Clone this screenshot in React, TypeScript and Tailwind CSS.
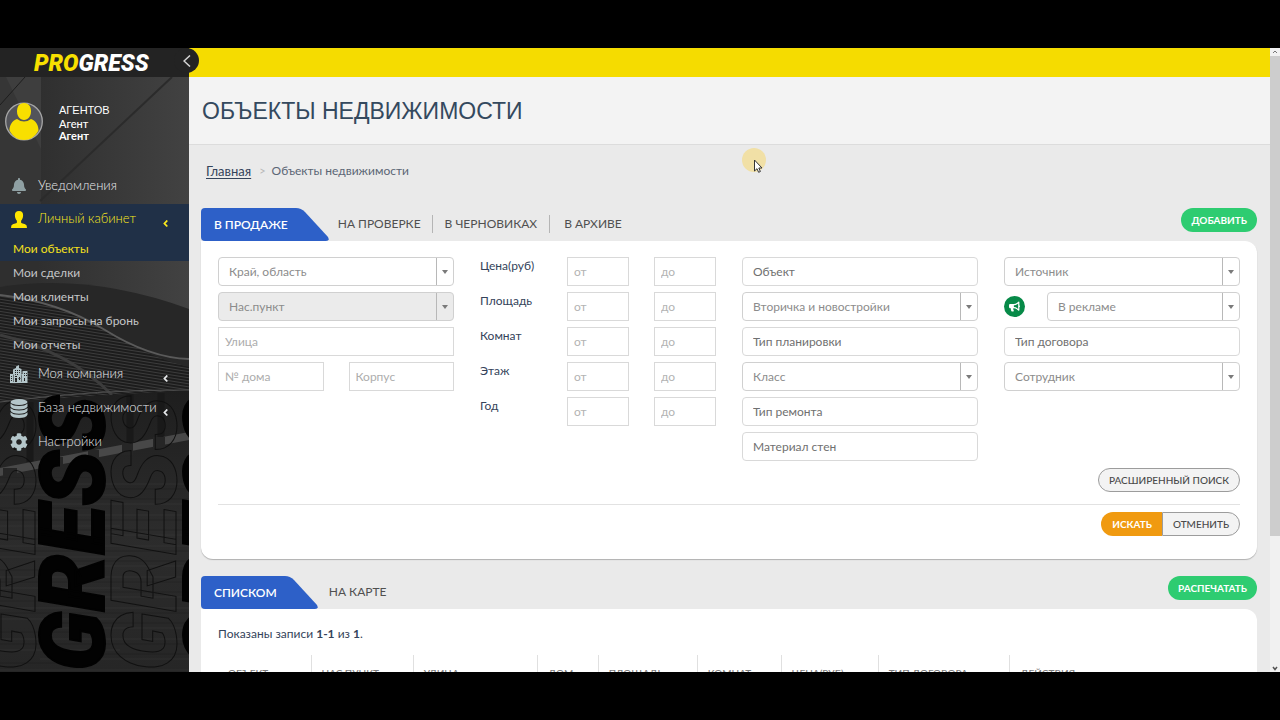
import React from "react";
import { FaAngleLeft, FaBell, FaBullhorn, FaCog } from "react-icons/fa";

const field =
  "h-[29px] w-full min-w-0 border border-[#d9d9d9] bg-white text-xs outline-none";

function PlainInput({ label }: { label: string }) {
  return (
    <input
      aria-label={label}
      placeholder={label}
      className={`${field} px-1.5 placeholder:text-[#adadad]`}
    />
  );
}

function TagInput({ label }: { label: string }) {
  return (
    <input
      aria-label={label}
      placeholder={label}
      className={`${field} rounded border-[#cfcfcf] px-2.5 placeholder:text-[#707070]`}
    />
  );
}

function Dropdown({ label, disabled }: { label: string; disabled?: boolean }) {
  return (
    <div
      className={`flex h-[29px] w-full min-w-0 overflow-hidden rounded border border-[#d0d0d0] ${
        disabled ? "bg-[#ebebeb]" : "bg-white"
      }`}
    >
      <select
        aria-label={label}
        disabled={disabled}
        className="min-w-0 flex-1 appearance-none bg-transparent px-2.5 text-xs text-[#8c8c8c] opacity-100 outline-none"
      >
        <option>{label}</option>
      </select>
      <span className="flex w-[17px] items-center justify-center border-l border-[#b8b8b8]">
        <svg width="6" height="4" viewBox="0 0 6 4" aria-hidden="true">
          <path d="M0 0H6L3 4Z" fill="#7a7a7a" />
        </svg>
      </span>
    </div>
  );
}

function RangeRow({ id, label }: { id: string; label: string }) {
  const box = `${field} px-1.5 placeholder:text-[#b3b3b3]`;
  return (
    <div className="grid grid-cols-3 gap-[25px]">
      <label htmlFor={id} className="text-xs leading-[18px] text-[#34435a]">
        {label}
      </label>
      <input id={id} placeholder="от" className={box} />
      <input aria-label={`${label} до`} placeholder="до" className={box} />
    </div>
  );
}

function ActiveTab({ children }: { children: React.ReactNode }) {
  return (
    <button className="flex h-[33px] text-xs font-semibold text-white">
      <span className="flex h-full items-center rounded-l bg-[#2d60c8] pr-2 pl-[13px]">
        {children}
      </span>
      <svg width="33" height="33" viewBox="0 0 33 33" aria-hidden="true">
        <path d="M0 0Q5 0 9 4L32 29Q34 33 30 33H0Z" fill="#2d60c8" />
      </svg>
    </button>
  );
}

function GreenButton({ children }: { children: React.ReactNode }) {
  return (
    <button className="h-6 rounded-full bg-[#2ecc71] px-2.5 text-[10px] font-bold text-white">
      {children}
    </button>
  );
}

function PersonIcon() {
  return (
    <svg width="16" height="17" viewBox="0 0 16 17" fill="currentColor" aria-hidden="true">
      <path d="M8 0C5 0 3.7 2 3.9 4.6C4 7 4.8 8.6 5.9 9.8V11.6C5.6 12.8 1.2 12.8 .4 14.6L0 17H16L15.6 14.6C14.8 12.8 10.4 12.8 10.1 11.6V9.8C11.2 8.6 12 7 12.1 4.6C12.3 2 11 0 8 0Z" />
    </svg>
  );
}

function BuildingsIcon() {
  return (
    <svg width="18" height="18" viewBox="0 0 18 18" aria-hidden="true">
      <path
        fill="currentColor"
        fillRule="evenodd"
        d="M0 9H3V4.500L6 3V1.500L9 0V3L11.500 4V9H12.500V6H17.500V18H0ZM1 11V12H2V11ZM1 13V14H2V13ZM1 15V16H2V15ZM3 9.500V17H3.500V9.500ZM5 5V6H6V5ZM7 5V6H8V5ZM9 5V6H10V5ZM5 7V8H6V7ZM7 7V8H8V7ZM9 7V8H10V7ZM5 9V10H6V9ZM7 9V10H8V9ZM5 11V12H7V11ZM5 13V17H7V13ZM11.500 9.500V17H12V9.500ZM14 8V9H15V8ZM16 8V9H17V8ZM14 10V11H15V10ZM16 10V11H17V10ZM9 12V13H8.500V14H9V15H10V14H10.500V13H10V12ZM14 13V16H15V13Z"
      />
    </svg>
  );
}

function DatabaseIcon() {
  return (
    <svg width="18" height="19" viewBox="0 0 18 19" fill="currentColor" aria-hidden="true">
      <ellipse cx="9" cy="3" rx="8.5" ry="3" />
      <path d="M.5 4.5Q3 7 9 7T17.500 4.500V7.500Q16 10.500 9 10.500T.5 7.500Z" />
      <path d="M.5 9Q3 11.500 9 11.500T17.500 9V11.500Q16 14.700 9 14.700T.5 11.500Z" />
      <path d="M.5 13.200Q3 15.700 9 15.700T17.500 13.200V15.700Q16 19 9 19T.5 15.700Z" />
    </svg>
  );
}

function SideRow({
  icon,
  label,
  chevron,
  active,
  compact,
}: {
  icon: React.ReactNode;
  label: string;
  chevron?: boolean;
  active?: boolean;
  compact?: boolean;
}) {
  return (
    <a
      href="#"
      className={`flex items-center pr-[18px] pl-2.5 text-[13px] font-light ${
        compact ? "h-[30px]" : "h-[34px]"
      } ${active ? "text-[#fbe91c]" : "text-[#e8eaec]"}`}
    >
      <span
        className={`flex w-[18px] shrink-0 justify-center ${
          active ? "text-[#ffe600]" : "text-[#b4c6ca]"
        }`}
      >
        {icon}
      </span>
      <span className="ml-2.5 flex-1 whitespace-nowrap">{label}</span>
      {chevron && <FaAngleLeft className="mt-2 size-[11px] shrink-0" />}
    </a>
  );
}

function SidebarArt() {
  const word = "GRESS";
  return (
    <svg
      className="absolute inset-0 h-full w-full"
      viewBox="0 0 189 595"
      preserveAspectRatio="xMinYMin slice"
      aria-hidden="true"
    >
      <defs>
        <linearGradient id="wall" x1="0" y1="0" x2="1" y2="0">
          <stop offset="0.2" stopColor="#2f2f2f" />
          <stop offset="1" stopColor="#424242" />
        </linearGradient>
        <linearGradient id="ground" x1="0" y1="0" x2="0" y2="1">
          <stop offset="0" stopColor="#1e1e1e" />
          <stop offset="0.5" stopColor="#2c2c2c" />
          <stop offset="1" stopColor="#262626" />
        </linearGradient>
        <pattern id="seats" width="8" height="3" patternUnits="userSpaceOnUse" patternTransform="rotate(9)">
          <rect width="8" height="3" fill="#1c1c1c" />
          <rect width="8" height="1" fill="#3c3c3c" />
        </pattern>
        <pattern id="streaks" width="189" height="31" patternUnits="userSpaceOnUse">
          <path d="M0 4H189M0 15H120M40 24H189" stroke="#3c3c3c" strokeWidth="1" opacity="0.4" />
          <path d="M0 9H189M60 19H189M0 28H90" stroke="#181818" strokeWidth="1" opacity="0.4" />
        </pattern>
      </defs>
      <rect width="189" height="595" fill="url(#wall)" />
      <path d="M0 0H41V135H0Z" fill="#3e3e3e" />
      <path d="M0 0H6L41 72V135H0Z" fill="#363636" />
      <path d="M0 28L25 0" stroke="#1e1e1e" />
      <path d="M172 0L40 124" stroke="#2b2b2b" strokeWidth="2" />
      <path d="M0 210Q90 196 189 232V595H0Z" fill="#272727" />
      <path d="M0 218Q60 225 105 253T189 290V350H0Z" fill="url(#seats)" />
      <path d="M0 218Q60 225 105 253T189 282" stroke="#5a5a5a" strokeWidth="2" fill="none" />
      <path d="M0 258Q70 275 112 318" stroke="#3c3c3c" strokeWidth="3" fill="none" />
      <path d="M0 325L189 313V595H0Z" fill="url(#ground)" />
      <path d="M0 325Q100 312 189 313" stroke="#505050" fill="none" />
      <path d="M30 325V385M130 317V372M161 316V368" stroke="#191919" strokeWidth="7" />
      <path d="M0 391L189 355V363L0 399Z" fill="#484848" />
      <path d="M3 391H17V400H3ZM47 380H63V391H47ZM88 373H99V385H88ZM122 366H133V378H122ZM153 360H165V371H153Z" fill="#262626" />
      <rect y="400" width="189" height="195" fill="url(#streaks)" />
      <g
        fontFamily="Roboto, sans-serif"
        fontWeight="900"
        fontStyle="italic"
        fontSize="90"
      >
        <text transform="translate(35 594) rotate(-90)" fill="none" stroke="#101010">{word}</text>
        <text transform="translate(104 594) rotate(-90)" fill="#020202" stroke="#020202" strokeWidth="2">{word}</text>
        <text transform="translate(176 594) rotate(-90)" fill="none" stroke="#101010">{word}</text>
        <text transform="translate(248 594) rotate(-90)" fill="#020202" stroke="#020202" strokeWidth="2">{word}</text>
      </g>
    </svg>
  );
}

function Sidebar() {
  return (
    <aside className="relative z-10 flex w-[189px] shrink-0 flex-col">
      <div className="relative flex h-[29px] items-center bg-[#232323]">
        <button
          aria-label="Свернуть меню"
          className="absolute top-0 -right-[10px] flex h-[25px] w-[25px] items-center justify-center rounded-full bg-[#232323] text-white"
        >
          <svg width="8" height="12" viewBox="0 0 8 12" fill="none" stroke="#d5d5d5" strokeWidth="1.5" aria-hidden="true">
            <path d="M7 .5L1 6L7 11.500" />
          </svg>
        </button>
        <a
          href="#"
          className="pt-0.5 pl-[34px] font-['Roboto',sans-serif] text-[23px] leading-[29px] font-black text-white italic"
        >
          <span className="text-[#f8e000]">PRO</span>GRESS
        </a>
      </div>
      <div className="relative flex-1 overflow-hidden bg-[#2c2c2c]">
        <SidebarArt />
        <div className="relative">
          <div className="flex h-[94px] items-start pt-[25px] pl-[5px]">
            <svg width="38" height="39" viewBox="0 0 38 39" aria-hidden="true">
              <circle cx="19" cy="19.500" r="18.300" fill="#53545a" stroke="#a7a7a7" strokeWidth="1.300" />
              <path d="M19 1C14 1 12 5 12 9.500C12 14 15 18 19 18S26 14 26 9.500C26 5 24 1 19 1Z" fill="#f8df00" />
              <path d="M12 17C7 19 4.500 23 4.500 28.500C8 35 13 38 19 38S30 35 33.500 28.500C33.500 23 31 19 26 17Q19 22 12 17Z" fill="#f8df00" />
            </svg>
            <div className="pl-4 text-[11px] leading-3 text-white">
              <p className="font-['Liberation_Sans',sans-serif] leading-4">АГЕНТОВ</p>
              <p className="font-medium">Агент</p>
              <p className="font-bold">Агент</p>
            </div>
          </div>
          <nav>
            <SideRow icon={<FaBell className="size-4 text-[#8fa0a3]" />} label="Уведомления" compact />
            <div className="mt-[3px] bg-[#203047]">
              <SideRow icon={<PersonIcon />} label="Личный кабинет" chevron active compact />
              <a href="#" className="mt-[3px] block pl-[13px] text-xs leading-6 text-[#f5e11c]">
                Мои объекты
              </a>
            </div>
            <div className="text-xs leading-6 text-[#c4c6c8]">
              {["Мои сделки", "Мои клиенты", "Мои запросы на бронь", "Мои отчеты"].map((t) => (
                <a key={t} href="#" className="block pl-[13px]">
                  {t}
                </a>
              ))}
            </div>
            <SideRow icon={<BuildingsIcon />} label="Моя компания" chevron />
            <SideRow icon={<DatabaseIcon />} label="База недвижимости" chevron />
            <SideRow icon={<FaCog className="size-[18px]" />} label="Настройки" />
          </nav>
        </div>
      </div>
    </aside>
  );
}

const tabLink = "text-xs leading-[18px] text-[#505050]";

function Filters() {
  return (
    <form className="rounded-b-xl rounded-tr-xl bg-white px-[17px] pt-4 pb-[23px] shadow-[0_1px_1px_#b0b0b0]">
      <div className="grid grid-cols-4 gap-[26px]">
        <div className="flex flex-col gap-1.5">
          <Dropdown label="Край, область" />
          <Dropdown label="Нас.пункт" disabled />
          <PlainInput label="Улица" />
          <div className="grid grid-cols-2 gap-[25px]">
            <PlainInput label="№ дома" />
            <PlainInput label="Корпус" />
          </div>
        </div>
        <div className="flex flex-col gap-1.5">
          <RangeRow id="price" label="Цена(руб)" />
          <RangeRow id="area" label="Площадь" />
          <RangeRow id="rooms" label="Комнат" />
          <RangeRow id="floor" label="Этаж" />
          <RangeRow id="year" label="Год" />
        </div>
        <div className="flex flex-col gap-1.5">
          <TagInput label="Объект" />
          <Dropdown label="Вторичка и новостройки" />
          <TagInput label="Тип планировки" />
          <Dropdown label="Класс" />
          <TagInput label="Тип ремонта" />
          <TagInput label="Материал стен" />
        </div>
        <div className="flex flex-col gap-1.5">
          <Dropdown label="Источник" />
          <div className="flex items-center gap-[22px]">
            <span className="flex size-[21px] shrink-0 items-center justify-center rounded-full bg-[#078a48] text-white">
              <FaBullhorn className="size-[11px]" />
            </span>
            <Dropdown label="В рекламе" />
          </div>
          <TagInput label="Тип договора" />
          <Dropdown label="Сотрудник" />
        </div>
      </div>
      <div className="flex justify-end border-b border-[#e2e2e2] pt-[7px] pb-3">
        <button
          type="button"
          className="h-6 rounded-full border border-[#9c9c9c] bg-[#f3f3f3] px-2.5 text-[10px] font-medium text-[#4a4a4a]"
        >
          РАСШИРЕННЫЙ ПОИСК
        </button>
      </div>
      <div className="flex justify-end pt-[7px] text-[10px]">
        <button
          type="submit"
          className="h-6 rounded-l-full bg-[#f09a10] pr-2.5 pl-[11px] font-bold text-white"
        >
          ИСКАТЬ
        </button>
        <button
          type="reset"
          className="h-6 rounded-r-full border border-[#9c9c9c] bg-[#f3f3f3] px-2.5 font-medium text-[#4a4a4a]"
        >
          ОТМЕНИТЬ
        </button>
      </div>
    </form>
  );
}

function Results() {
  const th = "border-l border-[#e0e0e0] pl-2.5 text-left font-medium";
  return (
    <section className="rounded-tr-xl bg-white px-[17px] pt-4">
      <p className="text-xs leading-[18px] text-[#34435a]">
        Показаны записи <b>1-1</b> из <b>1</b>.
      </p>
      <table className="mt-3 w-full table-fixed text-[10px] text-[#7c7c7c]">
        <thead>
          <tr className="h-9">
            <th className="w-[9.1%] pl-2.5 text-left font-medium">ОБЪЕКТ</th>
            <th className={`w-[10%] ${th}`}>НАС.ПУНКТ</th>
            <th className={`w-[12.2%] ${th}`}>УЛИЦА</th>
            <th className={`w-[5.9%] ${th}`}>ДОМ</th>
            <th className={`w-[9.7%] ${th}`}>ПЛОЩАДЬ</th>
            <th className={`w-[8.2%] ${th}`}>КОМНАТ</th>
            <th className={`w-[9.5%] ${th}`}>ЦЕНА(РУБ)</th>
            <th className={`w-[12.9%] ${th}`}>ТИП ДОГОВОРА</th>
            <th className={th}>ДЕЙСТВИЯ</th>
          </tr>
        </thead>
      </table>
    </section>
  );
}

function Pointer() {
  return (
    <svg
      className="absolute top-[99px] left-[551px]"
      width="28"
      height="28"
      viewBox="0 0 28 28"
      aria-hidden="true"
    >
      <circle cx="14" cy="13" r="12" fill="#f1e0a6" />
      <path d="M14.500 13V24L17 21.700L18.600 25.300L20.400 24.500L18.800 21H22Z" fill="#fff" stroke="#333" />
    </svg>
  );
}

export default function App() {
  return (
    <div className="h-screen overflow-hidden bg-black py-12 font-['Lato',sans-serif]">
      <div className="flex h-full overflow-hidden">
        <Sidebar />
        <main className="relative flex min-w-0 flex-1 flex-col overflow-hidden bg-[#eaeaea]">
          <div className="h-[29px] shrink-0 bg-[#f5dc00]" />
          <header className="flex h-[68px] shrink-0 items-center border-b border-[#dcdcdc] bg-[#f3f3f3] pt-0.5 pl-[13px]">
            <h1 className="font-['Liberation_Sans',sans-serif] text-[23px] text-[#34495e]">
              ОБЪЕКТЫ НЕДВИЖИМОСТИ
            </h1>
          </header>
          <div className="pr-[13px] pl-3">
            <nav className="flex h-[63px] items-start gap-1.5 pt-[17px] pl-[5px] text-xs leading-[18px] text-[#5b6675]">
              <a href="#" className="text-[13px] text-[#34435a] underline underline-offset-2">
                Главная
              </a>
              <span className="pl-0.5 text-[11px] text-[#b8b8b8]">&gt;</span>
              <span>Объекты недвижимости</span>
            </nav>
            <div className="flex items-start">
              <ActiveTab>В ПРОДАЖЕ</ActiveTab>
              <div className="flex flex-1 items-center divide-x divide-[#b5b5b5] pt-[7px] pl-[9px]">
                <button className={`${tabLink} pr-[11px]`}>НА ПРОВЕРКЕ</button>
                <button className={`${tabLink} px-3`}>В ЧЕРНОВИКАХ</button>
                <button className={`${tabLink} pl-3.5`}>В АРХИВЕ</button>
              </div>
              <GreenButton>ДОБАВИТЬ</GreenButton>
            </div>
            <Filters />
            <div className="flex items-start pt-[17px]">
              <ActiveTab>СПИСКОМ</ActiveTab>
              <div className="flex flex-1 items-center pt-[7px] pl-[11px]">
                <button className={tabLink}>НА КАРТЕ</button>
              </div>
              <GreenButton>РАСПЕЧАТАТЬ</GreenButton>
            </div>
            <Results />
          </div>
          <Pointer />
        </main>
        <div className="flex w-2.5 shrink-0 flex-col items-center bg-[#f1f1f1]">
          <svg className="h-2 shrink-0" width="6" height="8" viewBox="0 0 6 8" aria-hidden="true">
            <path d="M1 5L3 3L5 5" fill="none" stroke="#777" />
          </svg>
          <div className="h-[77%] w-full bg-[#cdcdcd]" />
          <svg className="mt-auto" width="6" height="6" viewBox="0 0 6 6" aria-hidden="true">
            <path d="M1 1L3 3.500L5 1" fill="none" stroke="#555" strokeWidth="1.500" />
          </svg>
        </div>
      </div>
    </div>
  );
}
